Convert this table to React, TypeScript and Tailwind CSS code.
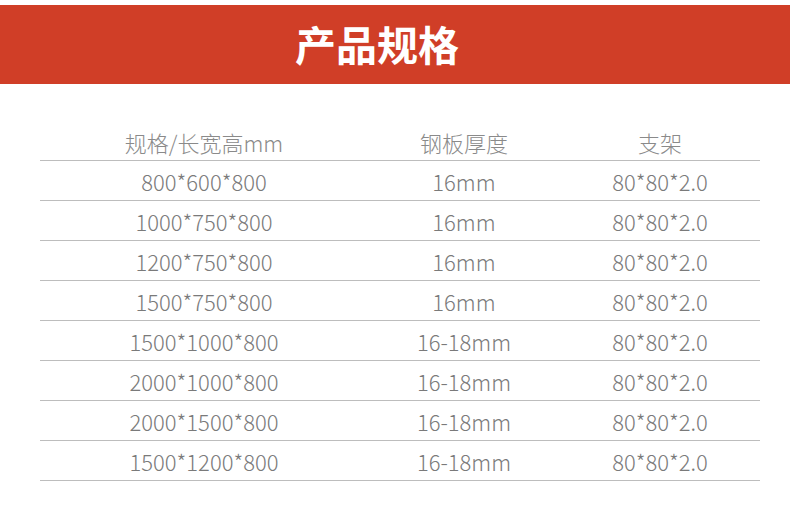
const rows = [
  ["800*600*800", "16mm", "80*80*2.0"],
  ["1000*750*800", "16mm", "80*80*2.0"],
  ["1200*750*800", "16mm", "80*80*2.0"],
  ["1500*750*800", "16mm", "80*80*2.0"],
  ["1500*1000*800", "16-18mm", "80*80*2.0"],
  ["2000*1000*800", "16-18mm", "80*80*2.0"],
  ["2000*1500*800", "16-18mm", "80*80*2.0"],
  ["1500*1200*800", "16-18mm", "80*80*2.0"],
];

const cols = "grid grid-cols-[328px_192px_200px]";

export default function App() {
  return (
    <div
      className="h-[509px] w-[790px] overflow-hidden bg-white pt-[5px]"
      style={{ fontFamily: '"Noto Sans CJK SC", "Noto Sans", sans-serif' }}
    >
      {/* Banner */}
      <div className="flex h-[79px] items-center justify-center bg-[#d03e27] pr-[36px]">
        <h1 className="pb-[2px] text-[41px] font-bold leading-none text-white">
          产品规格
        </h1>
      </div>

      {/* Spec table */}
      <div className="mx-[40px] mt-[40px] w-[720px] font-light">
        <div className={`${cols} h-[37px] border-b border-[#bdbdbd] text-[22px] leading-[37px] text-[#8a8a8a]`}>
          <div className="pb-[4px] text-center">规格/长宽高mm</div>
          <div className="pb-[4px] text-center">钢板厚度</div>
          <div className="pb-[4px] text-center">支架</div>
        </div>
        {rows.map((r, i) => (
          <div
            key={i}
            className={`${cols} h-[40px] items-center border-b border-[#bdbdbd] pt-[1px] text-[22px] text-[#7a7a7a]`}
          >
            {r.map((c, j) => (
              <div key={j} className="text-center">
                {c}
              </div>
            ))}
          </div>
        ))}
      </div>
    </div>
  );
}
